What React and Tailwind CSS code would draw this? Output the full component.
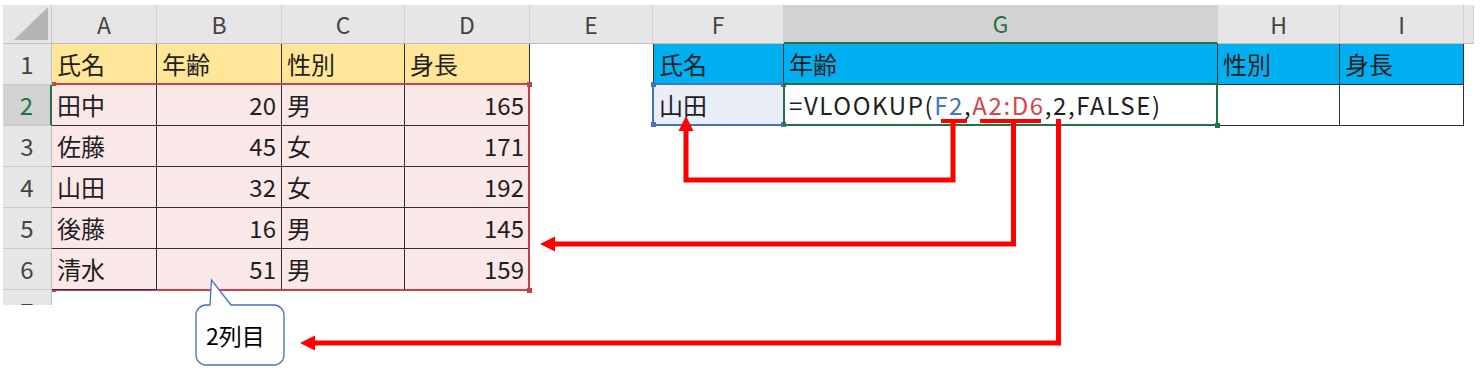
import React from 'react';

const cols = [
  { key: 'A', w: 'w-[105px]' },
  { key: 'B', w: 'w-[125px]' },
  { key: 'C', w: 'w-[123px]' },
  { key: 'D', w: 'w-[125px]' },
  { key: 'E', w: 'w-[123px]' },
  { key: 'F', w: 'w-[131px]' },
  { key: 'G', w: 'w-[434px]', active: true },
  { key: 'H', w: 'w-[122px]' },
  { key: 'I', w: 'w-[124px]' },
  { key: '', w: 'w-[10px]' },
];

const people = [
  ['田中', 20, '男', 165],
  ['佐藤', 45, '女', 171],
  ['山田', 32, '女', 192],
  ['後藤', 16, '男', 145],
  ['清水', 51, '男', 159],
];

const heads = ['氏名', '年齢', '性別', '身長'];

function RowHead({ n, active }) {
  return (
    <div
      className={`w-[49px] h-[41px] flex items-center justify-center border-b border-[#c9c9c9] border-r ${
        active ? 'bg-[#d2d2d2] text-[#217346] border-r-2 border-r-[#217346]' : 'bg-[#e6e6e6] text-[#444] border-r-[#bdbdbd]'
      }`}
    >
      {n}
    </div>
  );
}

function Cell({ w, bg = '', right, children, className = '' }) {
  return (
    <div
      className={`${w} h-[41px] flex items-center border-r border-b border-[#303030] ${bg} ${
        right ? 'justify-end pr-[5px]' : 'pl-[5px]'
      } ${className}`}
    >
      {children}
    </div>
  );
}

export default function App() {
  return (
    <div className="relative w-[1480px] h-[376px] bg-white overflow-hidden font-['Noto_Sans_CJK_JP','Noto_Sans',sans-serif] text-[24px] leading-none text-[#1e1e1e]">
      <div className="pt-[5px] pl-[3px]">
        {/* column headers */}
        <div className="flex h-[39px]">
          <div className="relative w-[49px] bg-[#e6e6e6] border-r border-b border-[#c6c6c6]">
            <svg className="absolute right-[3px] bottom-[3px]" width="34" height="33">
              <polygon points="34,0 34,33 0,33" fill="#b5b5b5" />
            </svg>
          </div>
          {cols.map((c) => (
            <div
              key={c.w}
              className={`${c.w} flex items-center justify-center text-[23px] border-r border-r-[#d0d0d0] ${
                c.active
                  ? 'bg-[#d2d2d2] text-[#217346] border-b-2 border-b-[#217346]'
                  : 'bg-[#e6e6e6] text-[#444] border-b border-b-[#bdbdbd]'
              }`}
            >
              {c.key}
            </div>
          ))}
        </div>

        {/* row 1 */}
        <div className="flex">
          <RowHead n="1" />
          {heads.map((h, i) => (
            <Cell key={h} w={cols[i].w} bg="bg-[#ffe699]">
              {h}
            </Cell>
          ))}
          <div className="w-[123px] h-[41px]" />
          {heads.map((h, i) => (
            <Cell key={'r' + h} w={cols[i + 5].w} bg="bg-[#00b0f0]" className={i === 0 ? 'border-l' : ''}>
              {h}
            </Cell>
          ))}
        </div>

        {/* rows 2-6 */}
        {people.map((p, r) => (
          <div key={p[0]} className="flex">
            <RowHead n={r + 2} active={r === 0} />
            <Cell w={cols[0].w} bg="bg-[#fae8e9]" className="relative">
              {p[0]}
              {r === 0 && (
                <div className="absolute left-0 top-[-2px] w-[478px] h-[208px] border-t-2 border-r-2 border-b-2 border-[#c9404a] pointer-events-none">
                  <span className="absolute left-0 top-[-3px] w-[4px] h-[4px] bg-[#c9404a]" />
                  <span className="absolute right-[-4px] top-[-3px] w-[5px] h-[5px] bg-[#c9404a]" />
                  <span className="absolute left-0 bottom-[-3px] w-[4px] h-[4px] bg-[#c9404a]" />
                  <span className="absolute right-[-4px] bottom-[-4px] w-[5px] h-[5px] bg-[#c9404a]" />
                </div>
              )}
            </Cell>
            <Cell w={cols[1].w} bg="bg-[#fae8e9]" right>
              {p[1]}
            </Cell>
            <Cell w={cols[2].w} bg="bg-[#fae8e9]">
              {p[2]}
            </Cell>
            <Cell w={cols[3].w} bg="bg-[#fae8e9]" right>
              {p[3]}
            </Cell>
            {r === 0 && (
              <>
                <div className="w-[123px] h-[41px]" />
                <Cell w={cols[5].w} bg="bg-[#e9eef8]" className="relative border-l">
                  山田
                  <div className="absolute left-[-2px] top-[-2px] right-[-2px] bottom-[-1px] border-2 border-[#4472c4]">
                    <span className="absolute left-[-3px] top-[-3px] w-[5px] h-[5px] bg-[#4472c4]" />
                    <span className="absolute right-[-3px] top-[-3px] w-[5px] h-[5px] bg-[#4472c4]" />
                    <span className="absolute left-[-3px] bottom-[-3px] w-[5px] h-[5px] bg-[#4472c4]" />
                    <span className="absolute right-[-3px] bottom-[-3px] w-[5px] h-[5px] bg-[#4472c4]" />
                  </div>
                </Cell>
                <Cell w={cols[6].w} className="relative">
                  <span className="tracking-[1.6px]">
                    =VLOOKUP(<span className="text-[#4472c4]">F2</span>,
                    <span className="text-[#d9434b]">A2:D6</span>,2,FALSE)
                  </span>
                  <div className="absolute left-[-1px] top-[-2px] right-[-1px] bottom-[-1px] border-2 border-[#217346]">
                    <span className="absolute right-[-4px] bottom-[-4px] w-[5px] h-[5px] bg-[#217346]" />
                  </div>
                </Cell>
                <Cell w={cols[7].w} />
                <Cell w={cols[8].w} />
              </>
            )}
          </div>
        ))}

        {/* row 7, cut off at the bottom of the capture */}
        <div className="w-[49px] h-[15px] overflow-hidden bg-[#e6e6e6] border-r border-[#bdbdbd] text-[#444]">
          <div className="h-[41px] pt-[9px] flex items-start justify-center">7</div>
        </div>
      </div>

      {/* arrows */}
      <svg className="pointer-events-none absolute left-0 top-0" width="1480" height="376">
        <g fill="none" stroke="#ff0000" strokeWidth="5">
          <path d="M941 121H967" strokeWidth="4" />
          <path d="M953 121V180H686V129" />
          <path d="M980 121H1041" strokeWidth="4" />
          <path d="M1013.5 121V244H553" />
          <path d="M1058.5 119V343H313" />
        </g>
        <g fill="#ff0000">
          <polygon points="686,116 678.5,131 693.5,131" />
          <polygon points="540,244 555,236.5 555,251.5" />
          <polygon points="300,343 315,335.5 315,350.5" />
        </g>
        <path
          d="M206 305H210L211.5 280L231 305H274A10 10 0 0 1 284 315V355A10 10 0 0 1 274 365H206A10 10 0 0 1 196 355V315A10 10 0 0 1 206 305Z"
          fill="#fff"
          stroke="#4472c4"
          strokeWidth="1.3"
        />
      </svg>
      <div className="absolute left-[196px] top-[305px] w-[88px] h-[60px] flex items-center pl-[10px] text-[23px] font-normal text-black">
        2列目
      </div>
    </div>
  );
}
